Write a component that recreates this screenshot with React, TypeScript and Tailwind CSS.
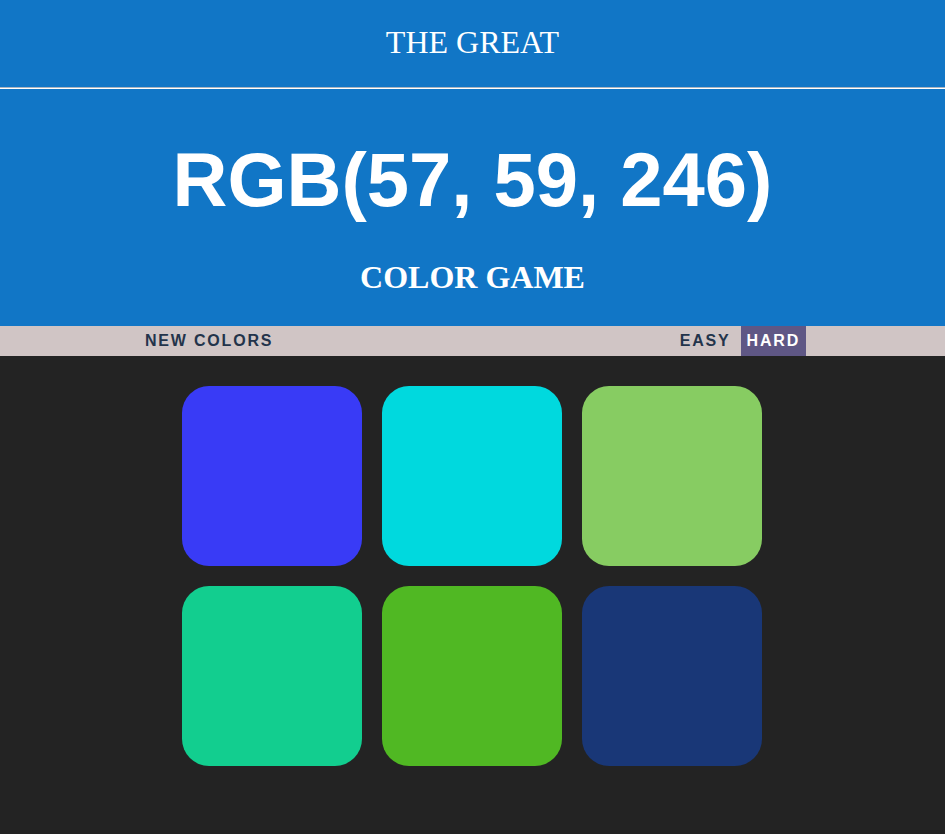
const squares = [
  { id: "sq-1", color: "bg-[#393bf6]" },
  { id: "sq-2", color: "bg-[#00d9de]" },
  { id: "sq-3", color: "bg-[#87cc62]" },
  { id: "sq-4", color: "bg-[#12ce8f]" },
  { id: "sq-5", color: "bg-[#50b823]" },
  { id: "sq-6", color: "bg-[#193777]" }
] as const;

export default function App() {
  return (
    <div className="min-h-screen bg-[#232323] font-['Liberation_Sans',Arial,sans-serif]">
      <header className="bg-[#1176c6] text-center text-white">
        <div className="flex h-[87px] items-center justify-center pb-[3px] font-['Liberation_Serif','Times_New_Roman',serif] text-[32px]">
          THE GREAT
        </div>
        <div className="h-px bg-[#a9b4c0]" />
        <div className="h-px bg-white" />
        <div className="pt-[53px] pb-[33px]">
          <h1 className="text-[76px] font-bold leading-none">RGB(57, 59, 246)</h1>
          <h2 className="mt-[43px] font-['Liberation_Serif','Times_New_Roman',serif] text-[32px] font-bold leading-none">
            COLOR GAME
          </h2>
        </div>
      </header>

      <nav className="flex h-[30px] items-stretch justify-between bg-[#d0c5c5] px-[139px] text-[16px] font-bold leading-[30px] tracking-[1.8px] text-[#23344b]">
        <button className="px-[6px] uppercase">New Colors</button>
        <div className="flex gap-[4px]">
          <button className="px-[6px] uppercase">Easy</button>
          <button className="bg-[#5f5785] px-[6px] uppercase text-white">Hard</button>
        </div>
      </nav>

      <div className="pr-px">
        <main className="mx-auto mt-[20px] grid w-[600px] grid-cols-3 gap-5 p-[10px]">
          {squares.map((sq) => (
            <div key={sq.id} id={sq.id} className={`h-[180px] w-[180px] rounded-[27px] ${sq.color}`} />
          ))}
        </main>
      </div>
    </div>
  );
}
